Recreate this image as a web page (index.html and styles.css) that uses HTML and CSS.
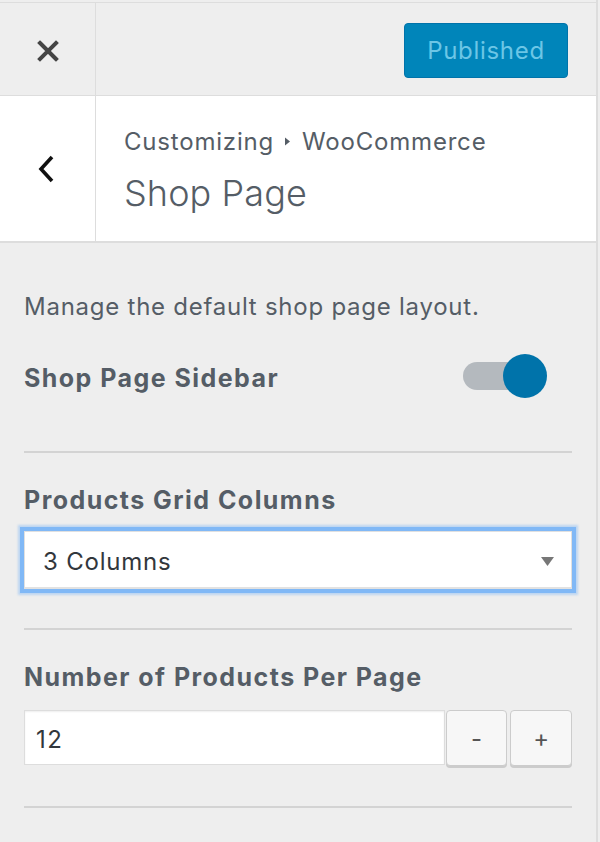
FILE: index.html
```html
<!DOCTYPE html>
<html lang="en">
<head>
<meta charset="utf-8">
<title>Shop Page</title>
<link rel="stylesheet" href="styles.css">
</head>
<body>
<div class="panel">
  <div class="topbar">
    <div class="close-cell">
      <svg width="22" height="22" viewBox="0 0 22 22"><path d="M3 3 L19 19 M19 3 L3 19" stroke="#444" stroke-width="4" stroke-linecap="square"/></svg>
    </div>
    <div class="actions">
      <button class="publish">Published</button>
    </div>
  </div>
  <div class="header">
    <div class="back-cell">
      <svg width="18" height="30" viewBox="0 0 18 30"><polyline points="14,3 3,15 14,27" fill="none" stroke="#111" stroke-width="3.6"/></svg>
    </div>
    <div class="titles">
      <div class="crumb">Customizing <svg class="tri" width="7" height="9" viewBox="0 0 7 9"><path d="M1 0.5 L6 4.5 L1 8.5 Z" fill="#555d66"/></svg> WooCommerce</div>
      <div class="title">Shop Page</div>
    </div>
  </div>
  <div class="content">
    <p class="desc">Manage the default shop page layout.</p>
    <div class="toggle-row">
      <span class="label">Shop Page Sidebar</span>
      <span class="toggle"><span class="track"></span><span class="knob"></span></span>
    </div>
    <hr class="divider divider-1">
    <div class="label block-label">Products Grid Columns</div>
    <div class="select">
      <span>3 Columns</span>
      <svg width="13" height="9" viewBox="0 0 13 9"><path d="M0 0 L13 0 L6.5 9 Z" fill="#777"/></svg>
    </div>
    <hr class="divider divider-2">
    <div class="label block-label">Number of Products Per Page</div>
    <div class="number-row">
      <div class="number-input">12</div>
      <button class="step step-minus">-</button>
      <button class="step step-plus">+</button>
    </div>
    <hr class="divider divider-3">
  </div>
</div>
</body>
</html>
```
FILE: styles.css
```css
* { box-sizing: border-box; }
html, body {
  margin: 0;
  padding: 0;
  background: #eeeeee;
  font-family: Inter, "Open Sans", "Liberation Sans", sans-serif;
}
.panel {
  width: 598px;
  height: 842px;
  border-right: 2px solid #dddddd;
  padding-top: 2px;
}
.topbar {
  display: flex;
  height: 94px;
  border-top: 1px solid #dddddd;
  border-bottom: 1px solid #dddddd;
}
.close-cell {
  width: 96px;
  border-right: 1px solid #dddddd;
  display: flex;
  align-items: center;
  justify-content: center;
  padding-top: 3px;
}
.actions {
  flex: 1;
  display: flex;
  justify-content: flex-end;
  align-items: center;
  padding-right: 28px;
  padding-top: 2px;
}
.publish {
  width: 164px;
  height: 55px;
  background: #0085ba;
  border: 1px solid #0073aa;
  border-radius: 4px;
  color: #6cc6e6;
  font-family: inherit;
  font-size: 24px;
  letter-spacing: 0.7px;
  padding: 0;
}
.header {
  display: flex;
  height: 147px;
  background: #ffffff;
  border-bottom: 2px solid #dddddd;
}
.back-cell {
  width: 96px;
  border-right: 1px solid #dddddd;
  display: flex;
  align-items: center;
  justify-content: center;
  padding-right: 2px;
}
.titles {
  padding-left: 28px;
  padding-top: 31px;
  color: #555d66;
}
.crumb {
  font-size: 24px;
  letter-spacing: 0.8px;
  line-height: 30px;
}
.tri { margin: 0 4px 3px 2px; vertical-align: middle; }
.title {
  font-size: 36px;
  font-weight: 300;
  letter-spacing: 0.1px;
  line-height: 42px;
  margin-top: 15px;
}
.content {
  padding: 49px 24px 0 24px;
  color: #555d66;
}
.desc {
  margin: 0;
  font-size: 24px;
  letter-spacing: 0.75px;
  line-height: 30px;
}
.label {
  font-size: 25px;
  font-weight: 700;
  letter-spacing: 1.45px;
  line-height: 30px;
}
.toggle-row {
  margin-top: 32px;
  height: 44px;
  display: flex;
  align-items: center;
  justify-content: space-between;
}
.toggle-row .label { padding-top: 4px; }
.toggle {
  position: relative;
  width: 84px;
  height: 44px;
  margin-right: 25px;
}
.track {
  position: absolute;
  left: 0;
  top: 8px;
  width: 60px;
  height: 28px;
  border-radius: 14px;
  background: #b4b9be;
}
.knob {
  position: absolute;
  right: 0;
  top: 0;
  width: 44px;
  height: 44px;
  border-radius: 50%;
  background: #0073aa;
}
.divider {
  border: 0;
  height: 2px;
  background: #d3d3d3;
  margin: 0;
}
.divider-1 { margin-top: 53px; }
.block-label { margin-top: 32px; }
.select {
  margin-top: 16px;
  height: 58px;
  background: #ffffff;
  border: 1px solid #e0e0e0;
  border-bottom: 2px solid #e2e2e2;
  box-shadow: 0 0 0 4px #80b8f6, 0 0 2px 6px rgba(128,184,246,0.45);
  display: flex;
  align-items: center;
  justify-content: space-between;
  padding: 4px 17px 0 18px;
  font-size: 24px;
  letter-spacing: 0.8px;
  color: #32373c;
}
.divider-2 { margin-top: 39px; }
.number-row {
  margin-top: 18px;
  display: flex;
  height: 57px;
}
.number-input {
  width: 423px;
  height: 55px;
  background: #ffffff;
  border: 1px solid #dddddd;
  box-shadow: inset 0 1px 2px rgba(0,0,0,0.07);
  font-size: 24px;
  letter-spacing: 1.5px;
  color: #32373c;
  display: flex;
  align-items: center;
  padding: 3px 0 0 11px;
}
.step {
  width: 62px;
  height: 56px;
  background: #f7f7f7;
  border: 1px solid #cccccc;
  border-radius: 4px;
  box-shadow: 0 2px 0 #cccccc;
  font-family: inherit;
  font-size: 24px;
  color: #555555;
  padding: 0;
}
.step-minus { margin-left: 1px; }
.step-plus { margin-left: 3px; }
.divider-3 { margin-top: 39px; }
```
